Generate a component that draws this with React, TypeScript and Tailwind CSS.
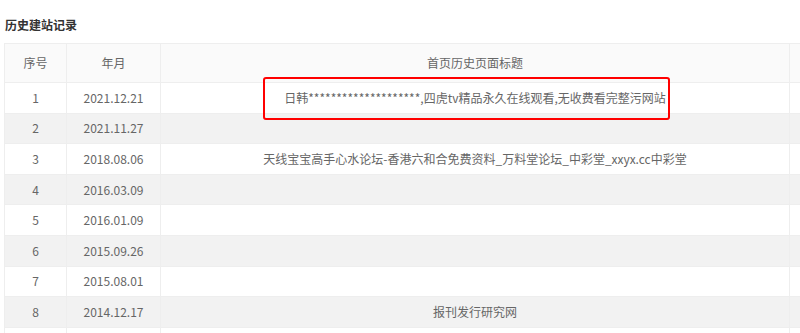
const rows: Array<{ no: number | null; date: string; title: string }> = [
  { no: 1, date: "2021.12.21", title: "日韩********************,四虎tv精品永久在线观看,无收费看完整污网站" },
  { no: 2, date: "2021.11.27", title: "" },
  { no: 3, date: "2018.08.06", title: "天线宝宝高手心水论坛-香港六和合免费资料_万料堂论坛_中彩堂_xxyx.cc中彩堂" },
  { no: 4, date: "2016.03.09", title: "" },
  { no: 5, date: "2016.01.09", title: "" },
  { no: 6, date: "2015.09.26", title: "" },
  { no: 7, date: "2015.08.01", title: "" },
  { no: 8, date: "2014.12.17", title: "报刊发行研究网" },
  { no: null, date: "", title: "" },
];

export default function App() {
  return (
    <div
      className="relative h-[333px] w-[800px] overflow-hidden bg-white"
      style={{ fontFamily: '"Microsoft YaHei", "Noto Sans CJK SC", "Noto Sans", sans-serif' }}
    >
      <h3 className="h-[43px] pl-[5px] pt-[16px] text-[12px] font-bold leading-[18px] text-[#333]">
        历史建站记录
      </h3>

      <div className="pl-[4px]">
        <table className="w-[900px] table-fixed border-collapse text-center text-[12px] text-[#666]">
          <colgroup>
            <col className="w-[62px]" />
            <col className="w-[94px]" />
            <col className="w-[629px]" />
            <col />
          </colgroup>
          <thead>
            <tr className="h-[39px] bg-[#fafafa]">
              <th className="border border-[#eee] font-normal">序号</th>
              <th className="border border-[#eee] font-normal">年月</th>
              <th className="border border-[#eee] font-normal">首页历史页面标题</th>
              <th className="border border-[#eee] font-normal"></th>
            </tr>
          </thead>
          <tbody>
            {rows.map((row, i) => (
              <tr
                key={i}
                className={`h-[30.6px] ${i % 2 === 1 ? "bg-[#f2f2f2]" : "bg-white"}`}
              >
                <td className="border border-[#eee]">{row.no}</td>
                <td className="border border-[#eee]">{row.date}</td>
                <td className="whitespace-nowrap border border-[#eee]">{row.title}</td>
                <td className="border border-[#eee]"></td>
              </tr>
            ))}
          </tbody>
        </table>
      </div>

      {/* highlight around the flagged title */}
      <div className="absolute left-[263px] top-[77px] h-[43px] w-[407px] rounded-[3px] border-2 border-[#f00]" />
    </div>
  );
}
